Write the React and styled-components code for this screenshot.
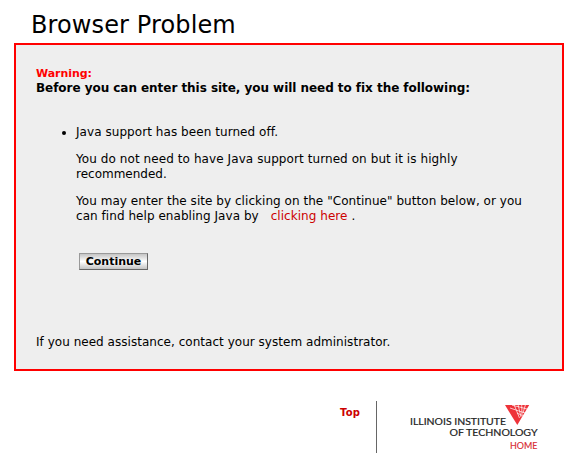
import React from "react";
import styled, { createGlobalStyle } from "styled-components";

const GlobalStyle = createGlobalStyle`
  * { box-sizing: border-box; }
  body {
    margin: 0;
    background: #fff;
    color: #000;
    font: 12px/15px Verdana, "DejaVu Sans", sans-serif;
    overflow: hidden;
  }
`;

const Page = styled.main`
  width: 574px;
  height: 464px;
  padding: 10px 10px 0 14px;
`;

const Title = styled.h1`
  margin: 0 0 3px 17px;
  font-size: 24px;
  line-height: 30px;
  font-weight: 400;
  letter-spacing: 0.12px;
  white-space: nowrap;
`;

const Panel = styled.section`
  height: 328px;
  padding: 21px 20px 0;
  border: 2px solid #f00;
  background: #eee;
`;

const Warning = styled.h2`
  margin: 0;
  color: #f00;
  font-size: 11px;
  line-height: 15px;
  letter-spacing: -0.05px;
`;

const Lead = styled.p`
  margin: 0;
  font-weight: 700;
  line-height: 14px;
  letter-spacing: -0.045px;
  white-space: nowrap;
`;

const Problems = styled.ul`
  margin: 30px 0 0;
  padding: 0 0 0 40px;
`;

const Problem = styled.li`
  padding: 0;
`;

const Paragraph = styled.p`
  margin: 12px 0 0;
`;

const Line = styled.span`
  display: block;
  white-space: nowrap;
  letter-spacing: ${(p) => p.$spacing || 0}px;
`;

const HelpLink = styled.a`
  margin-left: 8px;
  color: #c00;
  text-decoration: none;
`;

const ContinueButton = styled.button`
  display: block;
  width: 69px;
  height: 17px;
  margin: 29px 0 0 43px;
  padding: 1px 0 0;
  border: 1px solid;
  border-color: #999 #666 #666 #999;
  background: linear-gradient(#c4c4c4, #fff 50%, #c4c4c4);
  color: #000;
  font: 700 11px/14px Verdana, "DejaVu Sans", sans-serif;
`;

const Assistance = styled.p`
  margin: 65px 0 0;
  letter-spacing: 0.03px;
  white-space: nowrap;
`;

const Footer = styled.footer`
  display: flex;
  margin-top: 30px;
  padding-left: 326px;
`;

const TopLink = styled.a`
  width: 36px;
  padding-top: 4px;
  color: #c00;
  font-size: 10px;
  font-weight: 700;
  letter-spacing: 0.2px;
  text-decoration: none;
`;

const LogoLink = styled.a`
  height: 52px;
  padding-left: 29px;
  border-left: 1px solid #666;
`;

const Logo = styled.svg`
  display: block;
  font-family: Lato, sans-serif;
`;

function SchoolLogo() {
  return (
    <Logo width="140" height="52" viewBox="406 401 140 52">
      <path d="M505 405H529.2L517.3 425Z" fill="#ee3339" />
      <g stroke="#fff" fill="none">
        <path d="M512 405.2Q520 407 527 409M510 408Q519 411 525 413M517 413L523 416" strokeWidth=".7" />
        <path d="M514 404.5L519.5 418M518 404.5L521 417M521.7 404.5L522 415M525.5 404.5L523 413" strokeWidth=".7" />
      </g>
      <g fontSize="10" fill="#222" stroke="#222" strokeWidth=".2">
        <text x="410" y="425.4" textLength="96" lengthAdjust="spacingAndGlyphs">ILLINOIS INSTITUTE</text>
        <text x="449.5" y="436" textLength="88" lengthAdjust="spacingAndGlyphs">OF TECHNOLOGY</text>
      </g>
      <text x="510" y="449" fontSize="10" fill="#d7282f" stroke="#d7282f" strokeWidth=".15" textLength="27.5" lengthAdjust="spacingAndGlyphs">HOME</text>
    </Logo>
  );
}

export default function App() {
  return (
    <>
      <GlobalStyle />
      <Page>
        <Title>Browser Problem</Title>
        <Panel>
          <Warning>Warning:</Warning>
          <Lead>Before you can enter this site, you will need to fix the following:</Lead>
          <Problems>
            <Problem>
              <Line $spacing={0.06}>Java support has been turned off.</Line>
              <Paragraph>
                <Line $spacing={0.08}>You do not need to have Java support turned on but it is highly</Line>
                <Line>recommended.</Line>
              </Paragraph>
              <Paragraph>
                <Line $spacing={0.045}>You may enter the site by clicking on the "Continue" button below, or you</Line>
                <Line $spacing={0.05}>can find help enabling Java by <HelpLink>clicking here</HelpLink> .</Line>
              </Paragraph>
            </Problem>
          </Problems>
          <ContinueButton>Continue</ContinueButton>
          <Assistance>If you need assistance, contact your system administrator.</Assistance>
        </Panel>
        <Footer>
          <TopLink>Top</TopLink>
          <LogoLink><SchoolLogo /></LogoLink>
        </Footer>
      </Page>
    </>
  );
}
